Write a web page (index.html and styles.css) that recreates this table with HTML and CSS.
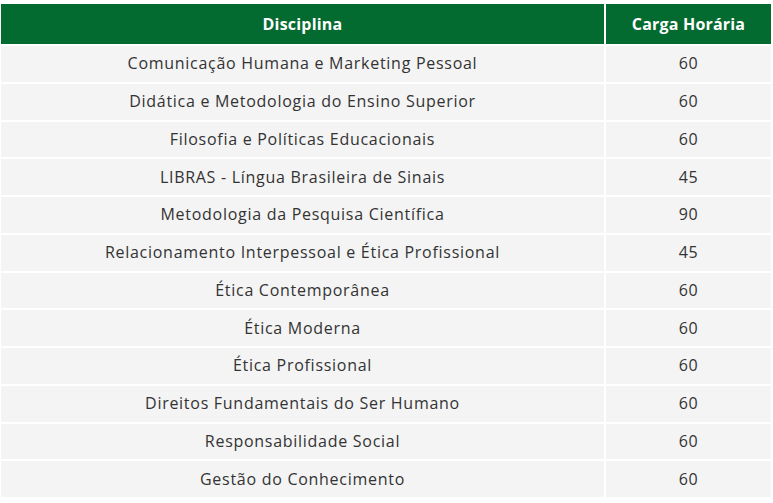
FILE: index.html
```html
<!DOCTYPE html>
<html lang="pt-BR">
<head>
<meta charset="utf-8">
<title>Disciplinas</title>
<link rel="stylesheet" href="styles.css">
</head>
<body>
<table class="grade">
  <thead>
    <tr><th class="col-disc">Disciplina</th><th class="col-ch">Carga Horária</th></tr>
  </thead>
  <tbody>
    <tr><td>Comunicação Humana e Marketing Pessoal</td><td>60</td></tr>
    <tr><td>Didática e Metodologia do Ensino Superior</td><td>60</td></tr>
    <tr><td>Filosofia e Políticas Educacionais</td><td>60</td></tr>
    <tr><td>LIBRAS - Língua Brasileira de Sinais</td><td>45</td></tr>
    <tr><td>Metodologia da Pesquisa Científica</td><td>90</td></tr>
    <tr><td>Relacionamento Interpessoal e Ética Profissional</td><td>45</td></tr>
    <tr><td>Ética Contemporânea</td><td>60</td></tr>
    <tr><td>Ética Moderna</td><td>60</td></tr>
    <tr><td>Ética Profissional</td><td>60</td></tr>
    <tr><td>Direitos Fundamentais do Ser Humano</td><td>60</td></tr>
    <tr><td>Responsabilidade Social</td><td>60</td></tr>
    <tr><td>Gestão do Conhecimento</td><td>60</td></tr>
  </tbody>
</table>
</body>
</html>
```
FILE: styles.css
```css
html, body {
  margin: 0;
  padding: 0;
  background: #ffffff;
}
body {
  padding: 2px 0 0 0;
  font-family: "Open Sans", "DejaVu Sans", sans-serif;
}
.grade {
  width: 774px;
  margin-left: -1px;
  border-collapse: separate;
  border-spacing: 2px;
  table-layout: fixed;
}
.grade th {
  background: #036b30;
  color: #ffffff;
  font-weight: 700;
  font-size: 16px;
  line-height: 20px;
  letter-spacing: 0.2px;
  height: 40px;
  padding: 0;
  text-align: center;
}
.col-disc { width: 603px; }
.col-ch { width: 165px; }
.grade td {
  background: #f4f4f4;
  color: #333333;
  font-size: 16px;
  line-height: 20px;
  height: 35.75px;
  padding: 0 0 1px 0;
  box-sizing: border-box;
  text-align: center;
  letter-spacing: 0.72px;
}
```
